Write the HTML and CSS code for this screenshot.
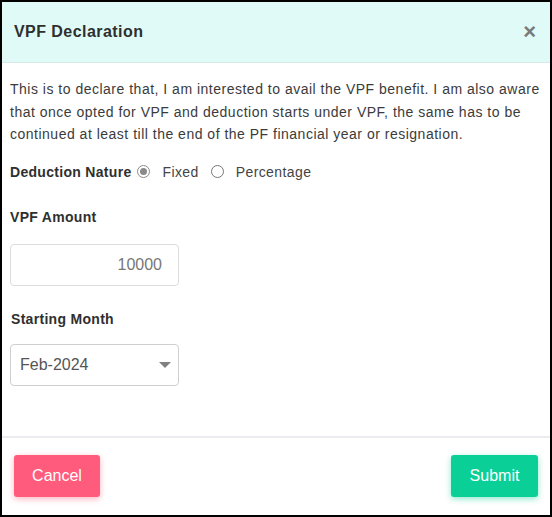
FILE: index.html
```html
<!DOCTYPE html>
<html lang="en">
<head>
  <meta charset="UTF-8">
  <meta name="viewport" content="width=device-width, initial-scale=1.0">
  <title>VPF Declaration</title>
  <link rel="stylesheet" href="styles.css">
</head>
<body>
  <div class="modal">
    <div class="modal-header">
      <h2>VPF Declaration</h2>
      <span class="close">&times;</span>
    </div>

    <div class="modal-body">
      <p class="note">This is to declare that, I am interested to avail the VPF benefit. I am also aware that once opted for VPF and deduction starts under VPF, the same has to be continued at least till the end of the PF financial year or resignation.</p>

      <div class="nature">
        <span class="label">Deduction Nature</span>
        <span class="radio checked"></span>
        <span class="opt">Fixed</span>
        <span class="radio"></span>
        <span class="opt">Percentage</span>
      </div>

      <div class="field amount">
        <div class="label">VPF Amount</div>
        <div class="box num">10000</div>
      </div>

      <div class="field month">
        <div class="label">Starting Month</div>
        <div class="box select">
          <span>Feb-2024</span>
          <span class="caret"></span>
        </div>
      </div>
    </div>

    <div class="modal-footer">
      <button class="btn cancel">Cancel</button>
      <button class="btn submit">Submit</button>
    </div>
  </div>
</body>
</html>
```

FILE: styles.css
```css
* {
  box-sizing: border-box;
}

body {
  margin: 0;
  font-family: "Liberation Sans", Arial, sans-serif;
  color: #3b3b3b;
  background: #fff;
}

.modal {
  width: 552px;
  height: 517px;
  border: 2px solid #000;
  display: flex;
  flex-direction: column;
  background: #fff;
}

.modal-header {
  height: 61px;
  background: #e0fbf7;
  border-bottom: 1px solid #d5e9e7;
  display: flex;
  align-items: center;
  justify-content: space-between;
  padding: 0 14px 0 12px;
}

.modal-header h2 {
  margin: 0;
  font-size: 16px;
  font-weight: bold;
  letter-spacing: 0.45px;
  color: #2f2f2f;
}

.close {
  font-size: 22px;
  font-weight: bold;
  color: #7a7a7a;
  line-height: 1;
}

.modal-body {
  flex: 1;
  padding: 15px 8px 0 8px;
}

.note {
  margin: 0;
  font-size: 14px;
  line-height: 22.5px;
  letter-spacing: 0.5px;
  color: #3b3b3b;
}

.nature {
  display: flex;
  align-items: center;
  height: 22px;
  margin-top: 15px;
  font-size: 14px;
}

.label {
  font-size: 14px;
  font-weight: bold;
  letter-spacing: 0.3px;
  color: #2f2f2f;
  line-height: 22px;
}

.radio {
  width: 13px;
  height: 13px;
  border: 1px solid #767676;
  border-radius: 50%;
  margin: 0 12px 0 0;
  position: relative;
  background: #fff;
}

.nature .label {
  margin-right: 6px;
}

.radio.checked {
  border-color: #8a8a8a;
}

.radio.checked::after {
  content: "";
  position: absolute;
  left: 2px;
  top: 2px;
  width: 7px;
  height: 7px;
  border-radius: 50%;
  background: #8a8a8a;
}

.opt {
  color: #444;
  letter-spacing: 0.4px;
  margin-right: 12px;
}

.amount {
  margin-top: 23px;
}

.month {
  margin-top: 22px;
}

.amount .box {
  margin-top: 16px;
}

.month .box {
  margin-top: 14px;
}

.month .label {
  padding-left: 1px;
}

.box {
  width: 169px;
  height: 42px;
  border: 1px solid #dcdcdc;
  border-radius: 4px;
  font-size: 16px;
  display: flex;
  align-items: center;
}

.num {
  justify-content: flex-end;
  padding-right: 16px;
  color: #777;
}

.select {
  justify-content: space-between;
  padding: 0 7px 0 9px;
  border-color: #cfcfcf;
  color: #555;
}

.caret {
  width: 0;
  height: 0;
  border-left: 6px solid transparent;
  border-right: 6px solid transparent;
  border-top: 6px solid #808080;
}

.modal-footer {
  height: 79px;
  border-top: 2px solid #ececf0;
  display: flex;
  align-items: flex-start;
  justify-content: space-between;
  padding: 17px 12px 0 12px;
}

.btn {
  height: 42px;
  border: none;
  border-radius: 3px;
  color: #fff;
  font-family: "Liberation Sans", Arial, sans-serif;
  font-size: 16px;
  padding: 0;
}

.cancel {
  width: 86px;
  background: #ff5b7c;
  box-shadow: 0 2px 6px rgba(255, 91, 124, 0.45);
}

.submit {
  width: 87px;
  background: #0acf97;
  box-shadow: 0 2px 6px rgba(10, 207, 151, 0.45);
}
```
